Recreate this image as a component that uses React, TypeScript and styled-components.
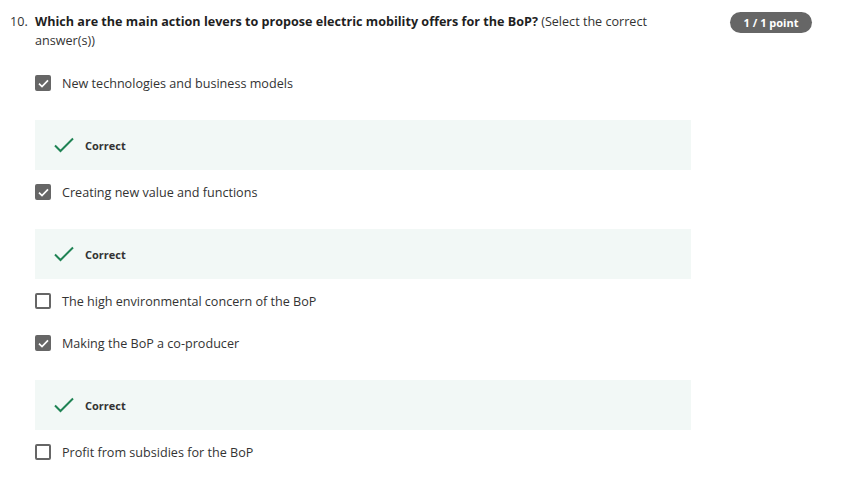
import React from 'react'
import styled, { createGlobalStyle } from 'styled-components'

const GlobalStyle = createGlobalStyle`
  body {
    margin: 0;
    background: #fff;
    font-family: 'Open Sans', 'Noto Sans', sans-serif;
    color: #333;
  }
`

const options = [
  { label: 'New technologies and business models', checked: true, correct: true },
  { label: 'Creating new value and functions', checked: true, correct: true },
  { label: 'The high environmental concern of the BoP', checked: false, correct: false },
  { label: 'Making the BoP a co-producer', checked: true, correct: true },
  { label: 'Profit from subsidies for the BoP', checked: false, correct: false },
]

const Page = styled.div`
  padding: 12px 36px 0 10px;
`

const Header = styled.div`
  display: flex;
  align-items: flex-start;
`

const Number = styled.div`
  width: 25px;
  flex-shrink: 0;
  font-size: 12.6px;
  line-height: 19px;
  color: #333;
`

const Prompt = styled.div`
  width: 625px;
  font-size: 12.6px;
  line-height: 19px;
  color: #333;
  b {
    color: #1f1f1f;
    font-weight: 700;
  }
`

const Badge = styled.div`
  margin-left: auto;
  width: 82px;
  height: 21px;
  border-radius: 11px;
  background: #666;
  color: #fff;
  font-size: 11px;
  font-weight: 700;
  display: flex;
  align-items: center;
  justify-content: center;
`

const List = styled.div`
  margin: 22px 0 0 25px;
  width: 656px;
  display: flex;
  flex-direction: column;
`

const Option = styled.div<{ $feedback: boolean }>`
  display: flex;
  flex-direction: column;
  gap: 26px;
  margin-bottom: ${({ $feedback }) => ($feedback ? '11px' : '20px')};
`

const Row = styled.label`
  display: flex;
  align-items: center;
  height: 22px;
  gap: 11px;
  font-size: 12.6px;
  color: #333;
`

const Box = styled.span<{ $checked: boolean }>`
  width: 16px;
  height: 16px;
  box-sizing: border-box;
  border-radius: 2px;
  display: flex;
  align-items: center;
  justify-content: center;
  background: ${({ $checked }) => ($checked ? '#666' : '#fff')};
  border: 2px solid #666;
`

const Feedback = styled.div`
  height: 50px;
  background: #f2f8f6;
  display: flex;
  align-items: center;
  padding-left: 19px;
  gap: 11px;
  font-size: 11px;
  font-weight: 700;
  color: #333;
`

const Check = () => (
  <svg width="11" height="9" viewBox="0 0 11 9" fill="none">
    <path d="M1 4.6 L4 7.5 L10 1.3" stroke="#fff" strokeWidth="1.7" />
  </svg>
)

const GreenCheck = () => (
  <svg width="20" height="16" viewBox="0 0 20 16" fill="none">
    <path d="M1 8.5 L6.5 14 L19 1.5" stroke="#1f8354" strokeWidth="2" />
  </svg>
)

export default function App() {
  return (
    <Page>
      <GlobalStyle />
      <Header>
        <Number>10.</Number>
        <Prompt>
          <b>Which are the main action levers to propose electric mobility offers for the BoP?</b>{' '}
          (Select the correct answer(s))
        </Prompt>
        <Badge>1 / 1 point</Badge>
      </Header>
      <List>
        {options.map(o => (
          <Option key={o.label} $feedback={o.correct}>
            <Row>
              <Box $checked={o.checked}>{o.checked && <Check />}</Box>
              {o.label}
            </Row>
            {o.correct && (
              <Feedback>
                <GreenCheck />
                Correct
              </Feedback>
            )}
          </Option>
        ))}
      </List>
    </Page>
  )
}
